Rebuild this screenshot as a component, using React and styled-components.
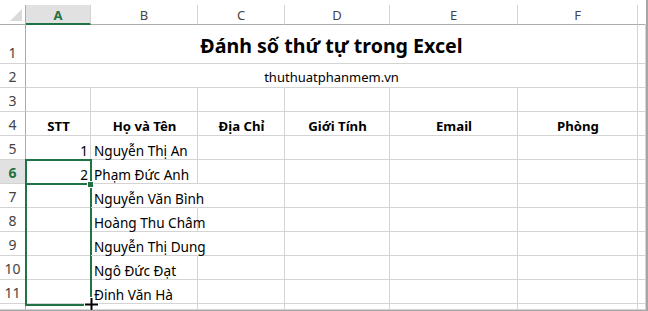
import React from 'react';
import styled, { createGlobalStyle } from 'styled-components';

const GlobalStyle = createGlobalStyle`
  html, body {
    margin: 0;
    padding: 0;
    background: #ffffff;
    overflow: hidden;
  }
  body {
    font-family: "Noto Sans", "Open Sans", sans-serif;
  }
`;

const GREEN = '#217346';
const GRID = '#d4d4d4';
const HEAD_LINE = '#ababab';

const columns = [
  { key: 'A', width: 65 },
  { key: 'B', width: 107 },
  { key: 'C', width: 87 },
  { key: 'D', width: 105 },
  { key: 'E', width: 128 },
  { key: 'F', width: 120 },
  { key: 'G', width: 8, label: '' },
];

const rowHeights = [39, 24, 24, 24, 24, 24, 24, 24, 24, 24, 24];

const headers = ['STT', 'Họ và Tên', 'Địa Chỉ', 'Giới Tính', 'Email', 'Phòng'];

const people = [
  { stt: 1, name: 'Nguyễn Thị An' },
  { stt: 2, name: 'Phạm Đức Anh' },
  { name: 'Nguyễn Văn Bình', overflow: true },
  { name: 'Hoàng Thu Châm' },
  { name: 'Nguyễn Thị Dung', overflow: true },
  { name: 'Ngô Đức Đạt' },
  { name: 'Đinh Văn Hà' },
];

const Frame = styled.div`
  width: 648px;
  height: 311px;
  box-sizing: border-box;
  padding-top: 5px;
  border-right: 2px solid #a6a6a6;
  border-bottom: 1px solid #a6a6a6;
  overflow: hidden;
`;

const Sheet = styled.div`
  position: relative;
  display: grid;
  grid-template-columns: 26px ${columns.map(c => `${c.width}px`).join(' ')};
  grid-template-rows: 20px ${rowHeights.map(h => `${h}px`).join(' ')} 6px;
  color: #000;
`;

const Corner = styled.div`
  display: flex;
  align-items: flex-end;
  justify-content: flex-end;
  padding: 0 3px 3px 0;
  box-sizing: border-box;
  border-right: 1px solid ${HEAD_LINE};
  border-bottom: 1px solid ${HEAD_LINE};
`;

const ColHead = styled.div`
  display: flex;
  align-items: center;
  justify-content: center;
  box-sizing: border-box;
  font-size: 13px;
  padding-top: 1px;
  font-weight: ${p => (p.$selected ? 700 : 400)};
  color: ${p => (p.$selected ? GREEN : '#444')};
  background: ${p => (p.$selected ? '#e1e1e1' : '#fff')};
  border-right: 1px solid ${p => (p.$last ? 'transparent' : GRID)};
  border-bottom: ${p => (p.$selected ? `2px solid ${GREEN}` : `1px solid ${HEAD_LINE}`)};
`;

const RowHead = styled.div`
  display: flex;
  align-items: flex-end;
  justify-content: center;
  box-sizing: border-box;
  padding-bottom: 1px;
  font-size: 14px;
  font-weight: ${p => (p.$selected ? 700 : 400)};
  color: ${p => (p.$selected ? GREEN : '#444')};
  background: ${p => (p.$selected ? '#e1e1e1' : '#fff')};
  border-right: 1px solid ${HEAD_LINE};
  border-bottom: 1px solid ${GRID};
`;

const Cell = styled.div`
  display: flex;
  align-items: flex-end;
  justify-content: ${p => (p.$align === 'right' ? 'flex-end' : p.$align === 'center' ? 'center' : 'flex-start')};
  box-sizing: border-box;
  padding: 0 2px 0 3px;
  font-size: ${p => (p.$bold ? '13.2px' : '13.6px')};
  line-height: 17px;
  font-weight: ${p => (p.$bold ? 700 : 400)};
  white-space: nowrap;
  overflow: visible;
  position: relative;
  z-index: ${p => (p.$overflow ? 1 : 0)};
  border-right: 1px solid ${p => (p.$overflow ? 'transparent' : GRID)};
  border-bottom: 1px solid ${GRID};
`;

const Merged = styled.div`
  grid-column: 2 / span 6;
  display: flex;
  align-items: flex-end;
  justify-content: center;
  box-sizing: border-box;
  padding-bottom: ${p => (p.$title ? '3px' : '1px')};
  font-size: ${p => (p.$title ? '19.6px' : '13px')};
  line-height: ${p => (p.$title ? '28px' : '18px')};
  font-weight: ${p => (p.$title ? 700 : 400)};
  white-space: nowrap;
  border-right: 1px solid ${GRID};
  border-bottom: 1px solid ${GRID};
`;

const Selection = styled.div`
  position: absolute;
  left: 25px;
  top: 154px;
  width: 67px;
  height: 147px;
  box-sizing: border-box;
  border: 2px solid ${GREEN};
  pointer-events: none;
`;

const ActiveLine = styled.div`
  position: absolute;
  left: 0;
  right: 0;
  top: 22px;
  height: 2px;
  background: ${GREEN};
`;

const FillHandle = styled.div`
  position: absolute;
  right: -4px;
  top: 20px;
  width: 5px;
  height: 5px;
  background: ${GREEN};
  border: 1px solid #fff;
`;

const Cursor = styled.svg`
  position: absolute;
  left: 83px;
  top: 291px;
  z-index: 3;
`;

function CornerTriangle() {
  return (
    <svg width="12" height="12" viewBox="0 0 12 12">
      <polygon points="12,0 12,12 0,12" fill="#dadada" />
    </svg>
  );
}

export default function App() {
  const dataCols = columns.length;
  const rows = [];

  // row 1 + 2: merged title cells
  rows.push(
    <React.Fragment key="r1">
      <RowHead>1</RowHead>
      <Merged $title>Đánh số thứ tự trong Excel</Merged>
      <Cell />
    </React.Fragment>
  );
  rows.push(
    <React.Fragment key="r2">
      <RowHead>2</RowHead>
      <Merged>thuthuatphanmem.vn</Merged>
      <Cell />
    </React.Fragment>
  );
  rows.push(
    <React.Fragment key="r3">
      <RowHead>3</RowHead>
      {columns.map(c => <Cell key={c.key} />)}
    </React.Fragment>
  );
  rows.push(
    <React.Fragment key="r4">
      <RowHead>4</RowHead>
      {headers.map(h => (
        <Cell key={h} $align="center" $bold>{h}</Cell>
      ))}
      <Cell />
    </React.Fragment>
  );
  people.forEach((p, i) => {
    const n = i + 5;
    rows.push(
      <React.Fragment key={`r${n}`}>
        <RowHead $selected={n === 6}>{n}</RowHead>
        <Cell $align="right">{p.stt}</Cell>
        <Cell $overflow={p.overflow}>{p.name}</Cell>
        {columns.slice(2).map(c => <Cell key={c.key} />)}
      </React.Fragment>
    );
  });

  return (
    <>
      <GlobalStyle />
      <Frame>
        <Sheet>
          <Corner><CornerTriangle /></Corner>
          {columns.map((c, i) => (
            <ColHead key={c.key} $selected={c.key === 'A'} $last={i === dataCols - 1}>
              {c.label !== undefined ? c.label : c.key}
            </ColHead>
          ))}
          {rows}
          <RowHead />
          {columns.map(c => <Cell key={c.key} />)}
          <Selection>
            <ActiveLine />
            <FillHandle />
          </Selection>
          <Cursor width="17" height="17" viewBox="0 0 17 17">
            <path d="M6.5 1h4v5.5H16v4h-5.5V16h-4v-5.5H1v-4h5.5z" fill="#fff" />
            <path d="M7.5 2h2v5.5H15v2H9.5V15h-2V9.5H2v-2h5.5z" fill="#000" />
          </Cursor>
        </Sheet>
      </Frame>
    </>
  );
}
